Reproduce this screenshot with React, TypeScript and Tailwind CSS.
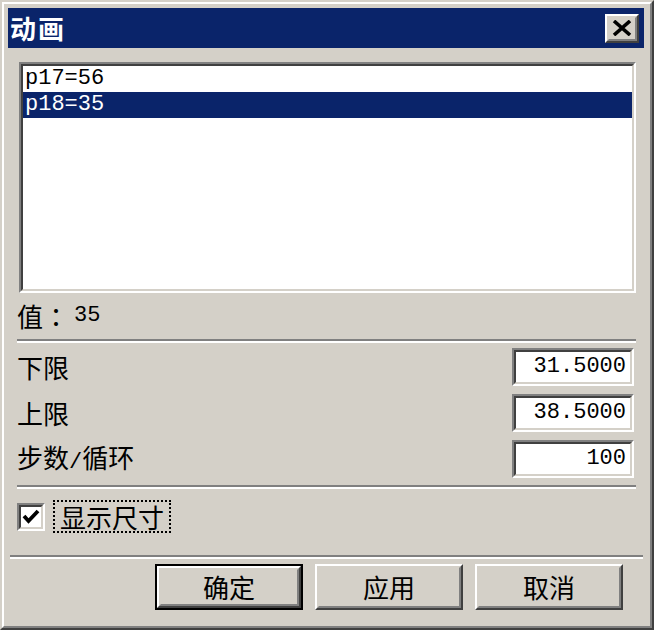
import React from "react";

const cjk = "font-['Noto_Sans_CJK_SC','Noto_Sans_CJK_JP',sans-serif]";
const mono = "font-['Liberation_Mono','DejaVu_Sans_Mono',monospace]";

function Separator({ className = "" }: { className?: string }) {
    return (
        <div className={className}>
            <div className="h-[2px] bg-[#808080]" />
            <div className="h-[2px] bg-white" />
        </div>
    );
}

function Sunken({ className = "", children }: { className?: string; children?: React.ReactNode }) {
    return (
        <div
            className={`border-2 border-t-[#808080] border-l-[#808080] border-r-white border-b-white ${className}`}
        >
            <div className="h-full w-full border-2 border-t-[#404040] border-l-[#404040] border-r-[#d4d0c8] border-b-[#d4d0c8] bg-white">
                {children}
            </div>
        </div>
    );
}

function Button({ label, isDefault = false }: { label: string; isDefault?: boolean }) {
    const face = (
        <div className="h-full w-full border-2 border-t-white border-l-white border-r-[#404040] border-b-[#404040]">
            <div className="flex h-full w-full items-center justify-center border-2 border-t-[#d4d0c8] border-l-[#d4d0c8] border-r-[#808080] border-b-[#808080] text-[26px] leading-none text-black">
                {label}
            </div>
        </div>
    );
    return (
        <div className={`h-[46px] w-[148px] ${isDefault ? "border-2 border-black" : ""}`}>
            {face}
        </div>
    );
}

function FieldRow({ label, value }: { label: React.ReactNode; value: string }) {
    return (
        <div className="flex h-[38px] items-center justify-between">
            <span className="pl-[9px] text-[26px] leading-none">{label}</span>
            <Sunken className="mr-[10px] h-[38px] w-[122px]">
                <div className={`flex h-full items-center justify-end pr-[4px] text-[22px] leading-none ${mono}`}>
                    {value}
                </div>
            </Sunken>
        </div>
    );
}

export default function App() {
    return (
        <div className={`h-[630px] w-[654px] bg-[#d4d0c8] text-black ${cjk}`}>
            <div className="h-full w-full border-2 border-t-[#d4d0c8] border-l-[#d4d0c8] border-r-[#404040] border-b-[#404040]">
                <div className="flex h-full w-full flex-col border-2 border-t-white border-l-white border-r-[#808080] border-b-[#808080] pt-[4px] pl-[4px] pr-[6px] pb-[2px]">
                    {/* title bar */}
                    <div className="flex h-[40px] items-center justify-between bg-[#0a246a] pl-[2px] pr-[5px]">
                        <span className="text-[26px] font-bold leading-none tracking-[2px] text-white">动画</span>
                        <div className="h-[29px] w-[34px] border-2 border-t-white border-l-white border-r-[#404040] border-b-[#404040]">
                            <div className="flex h-full w-full items-center justify-center border-2 border-t-[#d4d0c8] border-l-[#d4d0c8] border-r-[#808080] border-b-[#808080] bg-[#d4d0c8]">
                                <svg width="20" height="16" viewBox="0 0 20 16">
                                    <path d="M2 1 L18 15 M18 1 L2 15" stroke="black" strokeWidth="3.6" />
                                </svg>
                            </div>
                        </div>
                    </div>

                    {/* list */}
                    <Sunken className="mt-[14px] ml-[11px] mr-[8px] h-[231px]">
                        <div className={`text-[22px] leading-[26px] ${mono}`}>
                            <div className="h-[26px] pl-[2px]">p17=56</div>
                            <div className="h-[26px] bg-[#0a246a] pl-[2px] text-white">p18=35</div>
                        </div>
                    </Sunken>

                    <div className="flex h-[46px] items-center pl-[9px] text-[26px] leading-none">
                        <span>值</span>
                        <span className="w-[26px] text-center font-['Noto_Sans_CJK_TC',sans-serif]">：</span>
                        <span className={`ml-[5px] text-[22px] ${mono}`}>35</span>
                    </div>

                    <Separator className="ml-[9px] mr-[8px]" />

                    <div className="mt-[5px] flex flex-col gap-[8px]">
                        <FieldRow label="下限" value="31.5000" />
                        <FieldRow label="上限" value="38.5000" />
                        <FieldRow
                            label={
                                <>
                                    步数<span className={`text-[22px] ${mono}`}>/</span>循环
                                </>
                            }
                            value="100"
                        />
                    </div>

                    <Separator className="mt-[7px] ml-[9px] mr-[8px]" />

                    <div className="mt-[11px] flex h-[33px] items-center pl-[9px]">
                        <Sunken className="h-[28px] w-[28px]">
                            <div className="flex h-full w-full items-center justify-center">
                                <svg width="18" height="16" viewBox="0 0 18 16">
                                    <path d="M2 7 L6.5 12 L16 2" stroke="black" strokeWidth="3.8" fill="none" />
                                </svg>
                            </div>
                        </Sunken>
                        <div className="ml-[8px] flex h-[33px] items-center border-2 border-dotted border-black px-[5px] text-[26px] leading-none">
                            显示尺寸
                        </div>
                    </div>

                    <Separator className="mt-[22px] ml-[2px] mr-[1px]" />

                    <div className="mt-[5px] flex justify-end gap-[12px] pr-[21px]">
                        <Button label="确定" isDefault />
                        <Button label="应用" />
                        <Button label="取消" />
                    </div>
                </div>
            </div>
        </div>
    );
}
